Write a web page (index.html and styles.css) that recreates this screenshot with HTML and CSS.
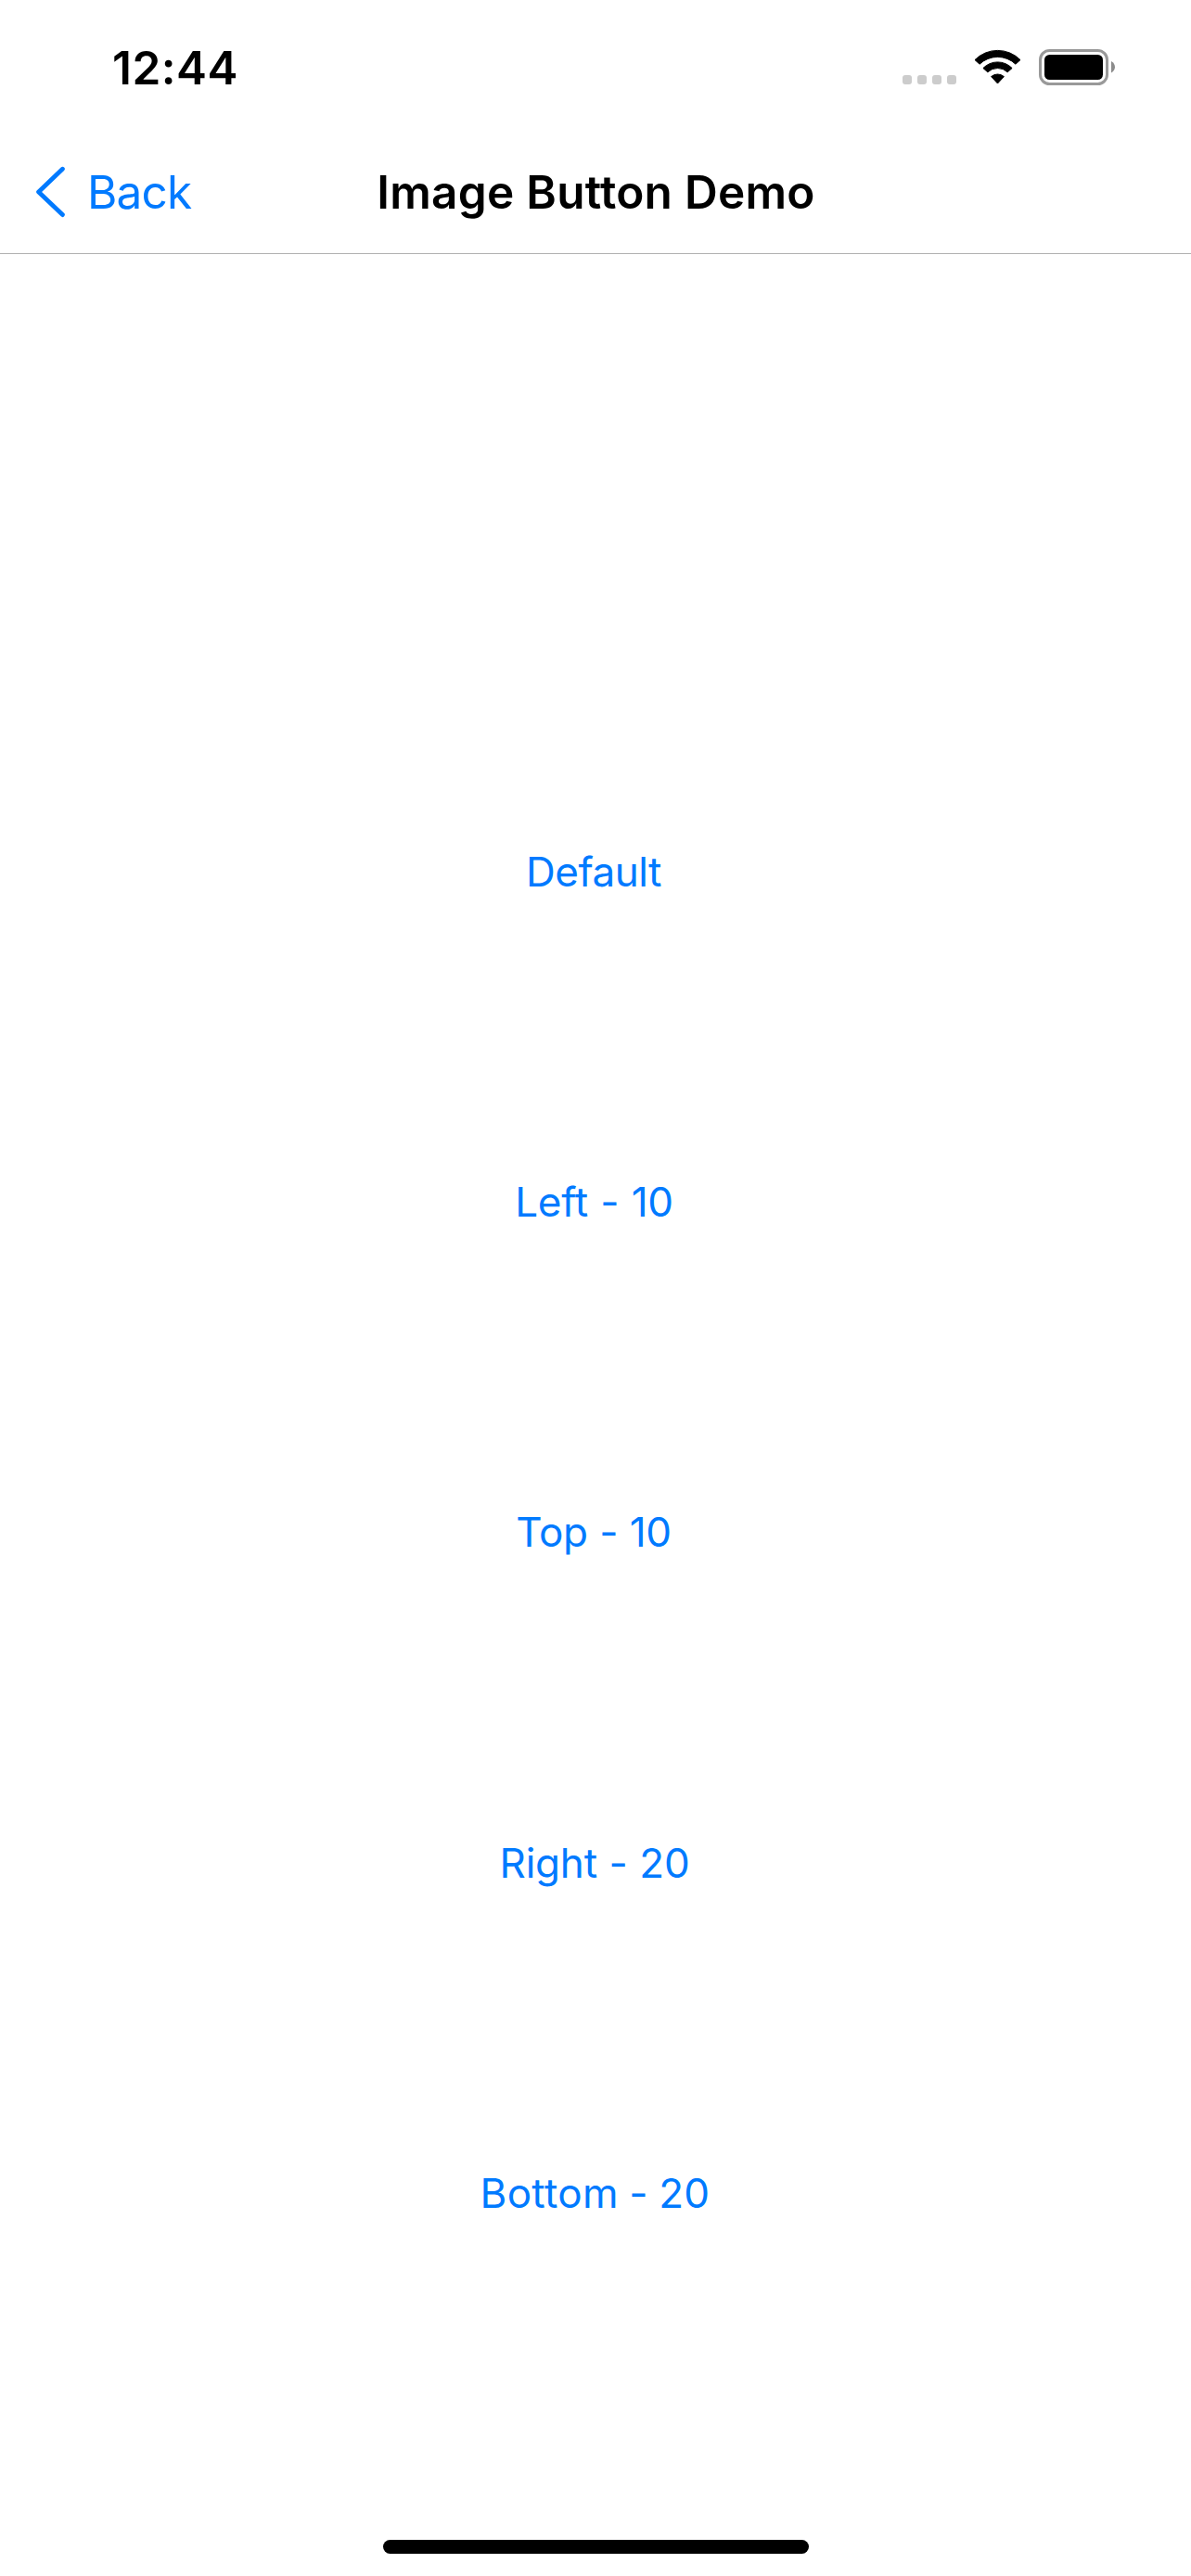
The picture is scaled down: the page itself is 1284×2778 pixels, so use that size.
FILE: index.html
```
<!DOCTYPE html>
<html lang="en">
<head>
<meta charset="utf-8">
<title>Image Button Demo</title>
<link rel="stylesheet" href="styles.css">
</head>
<body>
<div class="screen">
  <header class="status-bar">
    <span class="time">12:44</span>
    <svg class="status-icons" width="230" height="39" viewBox="0 0 230 39" aria-hidden="true">
      <g fill="#ccc">
        <rect x="0" y="28" width="10" height="10" rx="3"/>
        <rect x="16" y="28" width="10" height="10" rx="3"/>
        <rect x="32" y="28" width="10" height="10" rx="3"/>
        <rect x="48" y="28" width="10" height="10" rx="3"/>
      </g>
      <g stroke="#000" stroke-width="1" stroke-linejoin="round">
        <path d="M78 11.6A34.5 34.5 0 0 1 127 11.6L121.9 16.2A28 28 0 0 0 83.1 16.2Z"/>
        <path d="M86.9 20.5A21.8 21.8 0 0 1 118.1 20.5L113.2 24.8A15.5 15.5 0 0 0 91.8 24.8Z"/>
        <path d="M95.6 29.6A10.5 10.5 0 0 1 109.4 29.6L102.5 37Z"/>
      </g>
      <rect x="148.5" y="1.5" width="72" height="36" rx="10" fill="none" stroke="#999" stroke-width="3"/>
      <rect x="153" y="6" width="63" height="27" rx="5.5"/>
      <path d="M225 13C230.3 15.5 230.3 23 225 25.5Z" fill="#8c8c8c"/>
    </svg>
  </header>
  <nav class="nav-bar">
    <a class="back">
      <svg width="33" height="56" viewBox="0 0 33 56" aria-hidden="true">
        <path d="M29.4 3.2L3.6 28L29.4 52.6" fill="none" stroke="currentColor" stroke-width="4.8" stroke-linecap="round" stroke-linejoin="round"/>
      </svg>
      <span>Back</span>
    </a>
    <h1 class="title">Image Button Demo</h1>
  </nav>
  <main class="buttons">
    <button class="image-button default">Default</button>
    <button class="image-button left">Left - 10</button>
    <button class="image-button top">Top - 10</button>
    <button class="image-button right">Right - 20</button>
    <button class="image-button bottom">Bottom - 20</button>
  </main>
  <footer class="home-area"><div class="home-indicator"></div></footer>
</div>
</body>
</html>
```
FILE: styles.css
```
* { box-sizing: border-box; }

body {
  margin: 0;
  background: #fff;
  color: #000;
  font-family: Inter, "Liberation Sans", sans-serif;
}

.screen {
  display: flex;
  flex-direction: column;
  width: 1284px;
  height: 2778px;
}

.status-bar {
  display: flex;
  align-items: center;
  justify-content: space-between;
  height: 141px;
  padding: 4px 81px 0 121px;
}

.time {
  font-size: 49.5px;
  font-weight: 600;
  line-height: 60px;
  letter-spacing: 0.5px;
}

.status-icons { display: block; }

.nav-bar {
  display: grid;
  grid-template-columns: 1fr auto 1fr;
  align-items: center;
  height: 133px;
  padding: 0 38px;
  border-bottom: 1px solid #b0b0b0;
}

.back {
  display: flex;
  align-items: center;
  gap: 23px;
  color: #007aff;
  font-size: 49.5px;
  line-height: 60px;
  letter-spacing: -0.8px;
}

.title {
  margin: 0;
  padding-left: 1px;
  font-size: 49.5px;
  font-weight: 600;
  line-height: 60px;
  letter-spacing: 0.27px;
}

.buttons {
  display: grid;
  grid-auto-rows: 356.2px;
  place-items: center;
  padding: 488px 1px 0 0;
}

.image-button {
  padding: 0;
  border: 0;
  background: none;
  color: #007aff;
  font: 400 44px/54px Inter, "Liberation Sans", sans-serif;
}

.default { padding-right: 3px; letter-spacing: -0.5px; }
.left { padding-right: 2px; letter-spacing: -0.3px; word-spacing: 1.4px; }
.top { padding-right: 3px; letter-spacing: -0.3px; word-spacing: 0.45px; }
.right { padding-right: 1px; letter-spacing: -0.2px; word-spacing: 0.5px; }
.bottom { letter-spacing: 0.3px; word-spacing: -1.2px; }

.home-area {
  display: flex;
  justify-content: center;
  margin-top: auto;
  padding: 0 0 24px 1px;
}

.home-indicator {
  width: 459px;
  height: 15px;
  border-radius: 8px;
  background: #000;
}
```
